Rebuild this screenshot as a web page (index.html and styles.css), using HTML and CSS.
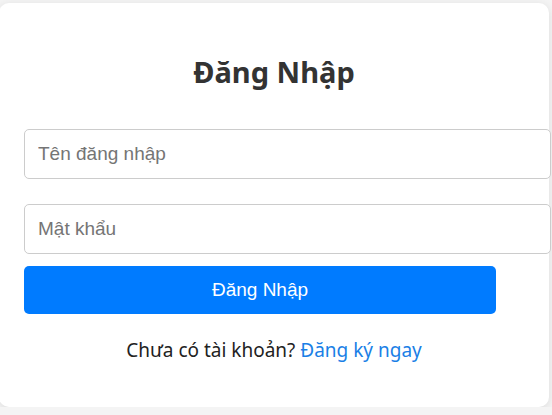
FILE: index.html
```html
<!DOCTYPE html>
<html lang="vi">
<head>
<meta charset="utf-8">
<title>Đăng Nhập</title>
<link rel="stylesheet" href="styles.css">
</head>
<body>
<div class="page">
  <div class="card">
    <h1 class="title">Đăng Nhập</h1>
    <form class="form">
      <input class="field field-user" type="text" placeholder="Tên đăng nhập">
      <input class="field field-pass" type="password" placeholder="Mật khẩu">
      <button class="submit" type="button">Đăng Nhập</button>
    </form>
    <p class="footer">Chưa có tài khoản? <a class="link" href="#">Đăng ký ngay</a></p>
  </div>
</div>
</body>
</html>
```

FILE: styles.css
```css
html, body {
  margin: 0;
  padding: 0;
  background: #f4f4f4;
  overflow: hidden;
}
.page {
  display: flex;
  justify-content: flex-end;
  padding: 3px 3px 0 0;
}
.card {
  width: 550px;
  flex: none;
  background: #fff;
  border-radius: 10px;
  box-shadow: 0 2px 10px rgba(0, 0, 0, 0.1);
  padding: 51px 25px 45px 25px;
  box-sizing: border-box;
  font-family: "Noto Sans", "Open Sans", sans-serif;
  color: #222;
}
.title {
  margin: 0 0 39px;
  font-size: 29px;
  line-height: 36px;
  font-weight: 700;
  color: #333;
  text-align: center;
}
.form {
  display: flex;
  flex-direction: column;
  align-items: flex-start;
  margin: 0;
}
.field {
  width: 527px;
  height: 50px;
  box-sizing: border-box;
  border: 1px solid #ccc;
  border-radius: 5px;
  padding: 0 13px;
  font-family: "Liberation Sans", Arial, sans-serif;
  font-size: 19px;
  color: #333;
  background: #fff;
  outline: none;
}
.field::placeholder {
  color: #757575;
}
.field-user {
  margin-bottom: 25px;
}
.field-pass {
  margin-bottom: 12px;
}
.submit {
  width: 472px;
  height: 48px;
  border: none;
  border-radius: 5px;
  background: #007bff;
  color: #fff;
  font-family: "Liberation Sans", Arial, sans-serif;
  font-size: 19px;
  cursor: pointer;
}
.footer {
  margin: 24px 0 0;
  font-size: 19px;
  line-height: 24px;
  text-align: center;
}
.link {
  color: #1a7fe6;
  text-decoration: none;
}
```
